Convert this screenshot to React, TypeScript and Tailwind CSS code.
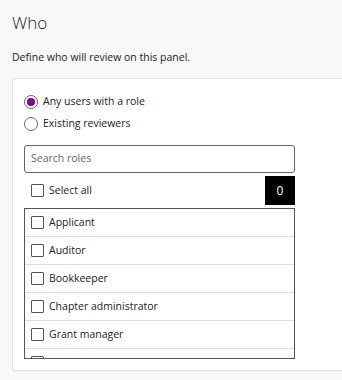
import React from 'react'

const roles = [
  "Applicant",
  "Auditor",
  "Bookkeeper",
  "Chapter administrator",
  "Grant manager",
  "Grantee",
];

function Box() {
  return <span className="block w-[13px] h-[13px] shrink-0 border border-[#555] rounded-[1px] bg-white" />;
}

function Radio({ checked }: { checked?: boolean }) {
  return (
    <span className="flex items-center justify-center w-[14px] h-[14px] shrink-0 rounded-full border border-[#666] bg-white">
      {checked && <span className="block w-[8px] h-[8px] rounded-full bg-[#7d0096]" />}
    </span>
  );
}

export default function App() {
  return (
    <div className="w-[342px] h-[380px] overflow-hidden bg-[#f8f8f8] text-[#222] font-['Open_Sans',sans-serif]">
      <div className="pl-3 pt-[11px]">
        <h2 className="text-[17px] font-light leading-[24px]">Who</h2>
        <p className="mt-[14px] text-[10.5px] leading-[16px]">Define who will review on this panel.</p>

        <div className="mt-[13px] w-[345px] bg-white border border-[#e2e2e2] rounded-[3px] shadow-[0_1px_1px_rgba(0,0,0,0.04)] pl-[11px] pt-[16px] pb-[11px]">
          <div className="flex flex-col gap-[8px] text-[10.5px]">
            <label className="flex items-center gap-[5px] h-[14px]">
              <Radio checked />
              <span>Any users with a role</span>
            </label>
            <label className="flex items-center gap-[5px] h-[14px]">
              <Radio />
              <span>Existing reviewers</span>
            </label>
          </div>

          <div className="mt-[14px] w-[271px]">
            <div className="h-[28px] border border-[#666] rounded-[3px] flex items-center px-[6px] text-[10.5px] text-[#666]">
              Search roles
            </div>

            <div className="mt-[3px] flex items-center justify-between h-[29px]">
              <label className="flex items-center gap-[5px] pl-[7px] text-[10.5px]">
                <Box />
                <span>Select all</span>
              </label>
              <span className="w-[30px] h-[29px] bg-black text-white text-[12px] flex items-center justify-center">0</span>
            </div>

            <div className="mt-[3px] h-[151px] overflow-hidden border border-[#555]">
              {roles.map((role) => (
                <div key={role} className="h-[28px] shrink-0 flex items-center gap-[5px] pl-[6px] border-b border-[#ddd] text-[10.5px]">
                  <Box />
                  <span>{role}</span>
                </div>
              ))}
            </div>
          </div>
        </div>
      </div>
    </div>
  );
}
